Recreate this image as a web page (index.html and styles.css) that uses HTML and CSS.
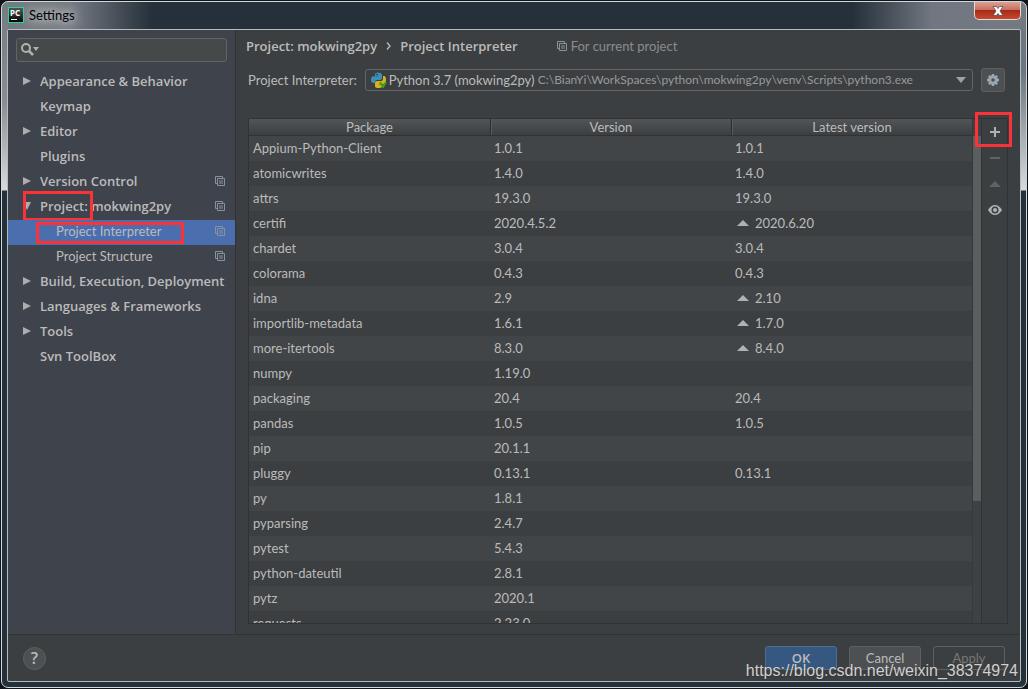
FILE: index.html
```
<!DOCTYPE html>
<html lang="en">
<head>
<meta charset="utf-8">
<title>Settings</title>
<link rel="stylesheet" href="styles.css">
</head>
<body>
<svg class="defs" width="0" height="0" aria-hidden="true">
  <symbol id="copy" viewBox="0 0 10 10"><path d="M7.5 2.5V.5H.5v7h2M2.500 2.500h7v7h-7zM4 5h4M4 7h4" fill="none" stroke="currentColor"/></symbol>
  <symbol id="right" viewBox="0 0 8 8"><path d="M0 0l8 4-8 4z" fill="currentColor"/></symbol>
  <symbol id="up" viewBox="0 0 12 6"><path d="M0 6l6-6 6 6z" fill="currentColor"/></symbol>
  <symbol id="down" viewBox="0 0 10 6"><path d="M0 0h10L5 6z" fill="currentColor"/></symbol>
</svg>
<div class="window">
  <header class="titlebar">
    <svg class="logo" width="16" height="16" viewBox="0 0 16 16"><defs><linearGradient id="lg" x2="0" y2="1"><stop stop-color="#555"/><stop offset="1" stop-color="#000"/></linearGradient></defs><rect x=".5" y=".5" width="15" height="15" fill="url(#lg)" stroke="#20d89a"/><text x="2" y="9" class="logo-text">PC</text><path d="M3 12.500h6" stroke="#fff"/></svg>
    <h1 class="title">Settings</h1>
    <button class="close" aria-label="Close"><svg width="12" height="10" viewBox="0 0 12 10"><path d="M1 .5h3.500L6 2.500 7.500.5H11L8 5l3 4.500H7.500L6 7.500 4.500 9.500H1L4 5z" fill="#fff" stroke="#49424c" stroke-width=".7"/></svg></button>
  </header>
  <div class="content">
    <div class="body">
      <nav class="sidebar">
        <label class="search" aria-label="Search settings">
          <svg width="18" height="14" viewBox="0 0 18 14"><circle cx="5" cy="5" r="4" fill="none" stroke="#afb1b3" stroke-width="2"/><path d="M8 8l4 4" stroke="#afb1b3" stroke-width="2.500"/><path d="M12 4h6l-3 4z" fill="#afb1b3"/></svg>
          <input type="text">
        </label>
        <ul class="tree">
          <li class="node"><svg class="arrow"><use href="#right"/></svg><a href="#">Appearance &amp; Behavior</a></li>
          <li class="node"><span class="arrow"></span><a href="#">Keymap</a></li>
          <li class="node"><svg class="arrow"><use href="#right"/></svg><a href="#">Editor</a></li>
          <li class="node"><span class="arrow"></span><a href="#">Plugins</a></li>
          <li class="node"><svg class="arrow"><use href="#right"/></svg><a href="#">Version Control</a><svg class="copy"><use href="#copy"/></svg></li>
          <li class="node"><svg class="arrow" viewBox="0 0 8 8"><path d="M0 0h8L4 8z" fill="currentColor"/></svg><a href="#">Project: mokwing2py</a><svg class="copy"><use href="#copy"/></svg><span class="mark mark-project"></span></li>
          <li class="node child selected"><a href="#">Project Interpreter</a><svg class="copy"><use href="#copy"/></svg><span class="mark mark-interpreter"></span></li>
          <li class="node child"><a href="#">Project Structure</a><svg class="copy"><use href="#copy"/></svg></li>
          <li class="node"><svg class="arrow"><use href="#right"/></svg><a href="#">Build, Execution, Deployment</a></li>
          <li class="node"><svg class="arrow"><use href="#right"/></svg><a href="#">Languages &amp; Frameworks</a></li>
          <li class="node"><svg class="arrow"><use href="#right"/></svg><a href="#">Tools</a></li>
          <li class="node"><span class="arrow"></span><a href="#">Svn ToolBox</a></li>
        </ul>
      </nav>
      <main class="main">
        <div class="crumbs">
          <b>Project: mokwing2py</b>
          <svg width="5" height="8" viewBox="0 0 5 8"><path d="M1 .5L4 4 1 7.500" fill="none" stroke="#bbb" stroke-width="1.300"/></svg>
          <b>Project Interpreter</b>
          <span class="scope"><svg class="copy"><use href="#copy"/></svg>For current project</span>
        </div>
        <div class="interpreter">
          <label for="interp">Project Interpreter:</label>
          <div class="combo">
            <select id="interp"><option>Python 3.7 (mokwing2py)</option></select>
            <svg class="python" width="16" height="16" viewBox="0 0 16 16"><path d="M4 4V2.500Q4 .5 7 .5t4 2V6q0 2-2 2H6Q4 8 4 10v1H2.500Q0 11 0 7.500T3 4.200h5V4z" fill="#3e8fb8"/><path d="M12 4h1q2 0 2 4t-2 4H8v.500h3V14q0 2-3.500 2T4 14v-3q0-2 2-2h4q2 0 2-2z" fill="#d8b020"/><circle cx="6" cy="2.500" r=".8" fill="#263238"/><path d="M9 10l3 5 3-5" fill="none" stroke="#3da51b" stroke-width="2"/></svg>
            <span class="path">C:\BianYi\WorkSpaces\python\mokwing2py\venv\Scripts\python3.exe</span>
            <svg class="drop" width="10" height="6"><use href="#down"/></svg>
          </div>
          <button class="gear" aria-label="Interpreter settings"><svg width="14" height="14" viewBox="-7 -7 14 14"><circle r="3.300" fill="none" stroke="#9aa7b0" stroke-width="3"/><path d="M0-6V-4M0 4v2M-6 0H-4M4 0h2M-4.200-4.200L-3-3M3 3l1.200 1.200M4.200-4.200L3-3M-3 3l-1.200 1.200" stroke="#9aa7b0" stroke-width="2.400"/></svg></button>
        </div>
        <section class="packages">
          <div class="table-area">
            <table>
              <thead><tr><th>Package</th><th>Version</th><th>Latest version</th></tr></thead>
              <tbody>
                <tr><td>Appium-Python-Client</td><td>1.0.1</td><td>1.0.1</td></tr>
                <tr><td>atomicwrites</td><td>1.4.0</td><td>1.4.0</td></tr>
                <tr><td>attrs</td><td>19.3.0</td><td>19.3.0</td></tr>
                <tr><td>certifi</td><td>2020.4.5.2</td><td><svg class="upgrade"><use href="#up"/></svg>2020.6.20</td></tr>
                <tr><td>chardet</td><td>3.0.4</td><td>3.0.4</td></tr>
                <tr><td>colorama</td><td>0.4.3</td><td>0.4.3</td></tr>
                <tr><td>idna</td><td>2.9</td><td><svg class="upgrade"><use href="#up"/></svg>2.10</td></tr>
                <tr><td>importlib-metadata</td><td>1.6.1</td><td><svg class="upgrade"><use href="#up"/></svg>1.7.0</td></tr>
                <tr><td>more-itertools</td><td>8.3.0</td><td><svg class="upgrade"><use href="#up"/></svg>8.4.0</td></tr>
                <tr><td>numpy</td><td>1.19.0</td><td></td></tr>
                <tr><td>packaging</td><td>20.4</td><td>20.4</td></tr>
                <tr><td>pandas</td><td>1.0.5</td><td>1.0.5</td></tr>
                <tr><td>pip</td><td>20.1.1</td><td></td></tr>
                <tr><td>pluggy</td><td>0.13.1</td><td>0.13.1</td></tr>
                <tr><td>py</td><td>1.8.1</td><td></td></tr>
                <tr><td>pyparsing</td><td>2.4.7</td><td></td></tr>
                <tr><td>pytest</td><td>5.4.3</td><td></td></tr>
                <tr><td>python-dateutil</td><td>2.8.1</td><td></td></tr>
                <tr><td>pytz</td><td>2020.1</td><td></td></tr>
                <tr><td>requests</td><td>2.23.0</td><td></td></tr>
              </tbody>
            </table>
          </div>
          <div class="track"><div class="thumb"></div></div>
          <div class="tools">
            <button aria-label="Install"><svg width="12" height="12" viewBox="0 0 12 12"><path d="M6 1v10M1 6h10" stroke="#afb1b3" stroke-width="2"/></svg><span class="mark mark-add"></span></button>
            <button aria-label="Uninstall" disabled><svg width="12" height="12" viewBox="0 0 12 12"><path d="M1 6h10" stroke="#606365" stroke-width="2"/></svg></button>
            <button class="dim" aria-label="Upgrade" disabled><svg width="12" height="6"><use href="#up"/></svg></button>
            <button aria-label="Show early releases"><svg width="14" height="10" viewBox="0 0 14 10"><path d="M0 5Q3 0 7 0t7 5Q11 10 7 10T0 5z" fill="#afb1b3"/><circle cx="7" cy="5" r="3.500" fill="#3c3f41"/><circle cx="7" cy="5" r="2" fill="#afb1b3"/></svg></button>
          </div>
        </section>
      </main>
    </div>
    <footer class="footer">
      <button class="help" aria-label="Help">?</button>
      <button class="btn primary">OK</button>
      <button class="btn">Cancel</button>
      <button class="btn disabled" disabled>Apply</button>
    </footer>
  </div>
  <span class="watermark">https://blog.csdn.net/weixin_38374974</span>
</div>
</body>
</html>
```
FILE: styles.css
```
* { box-sizing: border-box; }
body {
  margin: 0;
  padding: 1px;
  height: 100vh;
  background: #111419;
  color: #bbbbbb;
  font: 13px/18px Lato, "Open Sans", sans-serif;
}
button, input, select { font: inherit; color: inherit; margin: 0; padding: 0; }
a { color: inherit; text-decoration: none; }
.defs { position: absolute; }
.window {
  position: relative;
  height: 100%;
  display: flex;
  flex-direction: column;
  padding: 0 5px 5px;
  border: 1px solid #d0d8dc;
  border-radius: 7px;
  background:
    linear-gradient(#747a82, #8a8e92 100px, #d8dadc 188px, transparent 189px) left / 6px 100% no-repeat,
    linear-gradient(#747a82, #6b7680 70px, #d8dadc 188px, transparent 189px) right / 6px 100% no-repeat,
    linear-gradient(90deg, #747a82, #747a82 70px, #25303a 150px, #25303a 850px, #707780 930px, #747a82) top / 100% 30px no-repeat,
    #24303a;
}
.titlebar {
  height: 27px;
  display: flex;
  align-items: center;
  padding: 0 0 2px 1px;
  gap: 5px;
}
.logo-text { font: 700 8px "Noto Sans", sans-serif; fill: #fff; }
.title {
  margin: 0;
  flex: 1;
  font-size: 13px;
  font-weight: 400;
  color: #000;
  text-shadow: 0 0 8px #d0d4d8, 0 0 12px #c0c4c8, 0 0 16px #b0b4b8;
}
.close {
  align-self: flex-start;
  width: 47px;
  height: 18px;
  display: flex;
  align-items: center;
  justify-content: center;
  border: 1px solid #e4d8d6;
  border-top: 0;
  border-radius: 0 0 5px 5px;
  background: linear-gradient(#dda093, #c97060 45%, #a82a16 50%, #c44a30);
}
.content {
  flex: 1;
  min-height: 0;
  display: flex;
  flex-direction: column;
  border: 1px solid #b5bcbe;
  border-radius: 2px;
  background: #3c3f41;
}
.body { flex: 1; min-height: 0; display: flex; }
.sidebar {
  width: 228px;
  background: #3f434c;
  border-right: 1px solid #323232;
  padding-top: 8px;
}
.search {
  margin: 0 8px;
  height: 24px;
  display: flex;
  align-items: center;
  gap: 4px;
  padding: 0 4px;
  border: 1px solid #646464;
  border-radius: 3px;
  background: #45494a;
}
.search input { flex: 1; min-width: 0; border: 0; background: none; outline: 0; }
.tree { list-style: none; margin: 8px 0 0; padding: 0; }
.node {
  position: relative;
  height: 25px;
  display: flex;
  align-items: center;
  padding: 0 10px 3px 15px;
}
.node a { flex: 1; white-space: nowrap; }
.node:not(.child), .crumbs b, .primary {
  font-family: "Open Sans", "Noto Sans", sans-serif;
  font-weight: 600;
}
.arrow { flex: none; width: 8px; height: 8px; margin-right: 9px; color: #adadad; }
.copy { flex: none; width: 10px; height: 10px; color: #87939a; }
.node.child { padding-left: 48px; }
.selected { background: #4b6eaf; }
.mark { position: absolute; border: 3px solid #fb3238; pointer-events: none; }
.mark-project { left: 15px; top: -4px; width: 70px; height: 30px; }
.mark-interpreter { left: 28px; top: 2px; width: 148px; height: 22px; }
.main {
  flex: 1;
  min-width: 0;
  display: flex;
  flex-direction: column;
  padding: 7px 12px 10px 10px;
}
.crumbs { display: flex; align-items: center; gap: 9px; height: 18px; }
.scope { display: flex; align-items: center; gap: 4px; margin-left: 30px; color: #8c8c8c; }
.interpreter { display: flex; align-items: center; height: 24px; margin: 13px 3px 26px 2px; }
.combo {
  flex: 1;
  display: grid;
  grid-template-columns: 172px 1fr 10px;
  align-items: center;
  height: 22px;
  margin: 0 8px;
  padding-right: 6px;
  border: 1px solid #646464;
  border-radius: 3px;
}
.combo > * { grid-row: 1; }
.combo select {
  grid-column: 1 / -1;
  appearance: none;
  border: 0;
  background: none;
  outline: 0;
  padding-left: 23px;
}
.python { grid-column: 1; margin-left: 5px; pointer-events: none; }
.path { grid-column: 2; font-size: 12px; color: #999; white-space: nowrap; pointer-events: none; }
.drop { grid-column: 3; color: #9da2a6; pointer-events: none; }
.gear {
  width: 24px;
  height: 24px;
  display: flex;
  align-items: center;
  justify-content: center;
  border: 1px solid #5e6060;
  border-radius: 3px;
  background: #4c5052;
}
.packages {
  flex: 1;
  min-height: 0;
  display: flex;
  margin-left: 2px;
  border: 1px solid #323232;
}
.table-area { flex: 1; overflow: hidden; border-right: 1px solid #36393b; }
table { width: 100%; border-collapse: separate; border-spacing: 0; table-layout: fixed; }
th {
  height: 17px;
  padding: 0;
  line-height: 16px;
  font-weight: 400;
  background: linear-gradient(#515557, #3c3f41);
  border-bottom: 1px solid #303234;
}
th + th { border-left: 1px solid #2b2d2f; box-shadow: inset 1px 0 #5a5d5f; }
td { height: 25px; padding: 0 4px 1px; white-space: nowrap; }
tbody tr:nth-child(odd) { background: #414547; }
.upgrade { width: 12px; height: 6px; margin: 0 6px 2px 2px; color: #afb1b3; }
.track { width: 8px; padding-top: 17px; background: #3f4244; }
.thumb { height: 75%; background: #5b5e5f; }
.tools {
  width: 26px;
  border-left: 1px solid #323232;
}
.tools button {
  position: relative;
  width: 100%;
  height: 26px;
  display: flex;
  align-items: center;
  justify-content: center;
  border: 0;
  background: none;
}
.tools .dim { color: #606365; }
.tools .mark-add { left: -7px; top: -7px; width: 37px; height: 35px; }
.footer {
  height: 47px;
  display: flex;
  align-items: center;
  gap: 12px;
  padding: 0 15px;
  border-top: 1px solid #323232;
}
.help {
  width: 23px;
  height: 23px;
  margin-right: auto;
  border: 1px solid #5e6060;
  border-radius: 50%;
  background: #4c5052;
  font: 600 16px/18px "Open Sans", sans-serif;
}
.btn {
  width: 72px;
  height: 24px;
  border: 1px solid #5e6060;
  border-radius: 3px;
  background: #4c5052;
}
.primary { background: #365880; border-color: #4c708c; }
.disabled { background: none; color: #777; }
.watermark {
  position: absolute;
  right: 8px;
  bottom: 7px;
  font: 16px/18px "Liberation Sans", Arial, sans-serif;
  color: #d0d0d0;
  text-shadow: 0 1px 1px #333;
  pointer-events: none;
}
```
